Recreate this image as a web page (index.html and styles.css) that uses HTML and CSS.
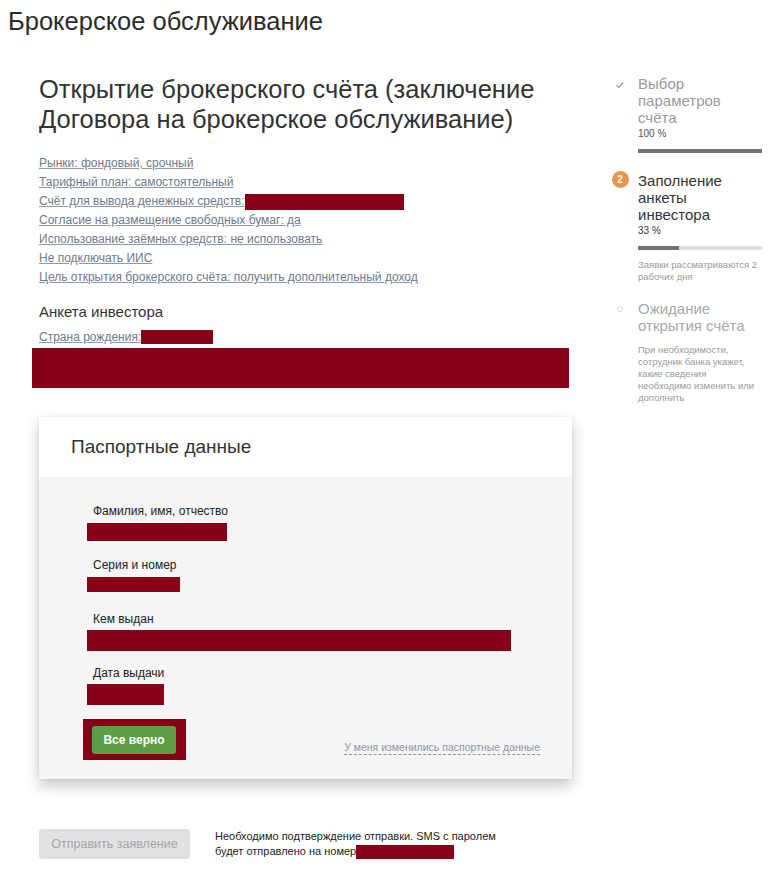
FILE: index.html
```html
<!DOCTYPE html>
<html lang="ru">
<head>
<meta charset="utf-8">
<title>Брокерское обслуживание</title>
<link rel="stylesheet" href="styles.css">
</head>
<body>
<h1 class="page-title">Брокерское обслуживание</h1>
<div class="layout">
  <main class="main">
    <h2 class="heading">Открытие брокерского счёта (заключение Договора на брокерское обслуживание)</h2>
    <ul class="params">
      <li><a class="param-link">Рынки: фондовый, срочный</a></li>
      <li><a class="param-link">Тарифный план: самостоятельный</a></li>
      <li><a class="param-link">Счёт для вывода денежных средств:</a><span class="redact r-account"></span></li>
      <li><a class="param-link">Согласие на размещение свободных бумаг: да</a></li>
      <li><a class="param-link">Использование заёмных средств: не использовать</a></li>
      <li><a class="param-link">Не подключать ИИС</a></li>
      <li><a class="param-link">Цель открытия брокерского счёта: получить дополнительный доход</a></li>
    </ul>
    <h3 class="section-title">Анкета инвестора</h3>
    <div class="params country"><a class="param-link">Страна рождения:</a><span class="redact r-country"></span></div>
    <div class="redact r-block"></div>

    <section class="card">
      <div class="card-head">Паспортные данные</div>
      <div class="card-body">
        <div class="field">
          <div class="field-label">Фамилия, имя, отчество</div>
          <div class="field-value"><span class="redact r-name"></span></div>
        </div>
        <div class="field">
          <div class="field-label">Серия и номер</div>
          <div class="field-value"><span class="redact r-number"></span></div>
        </div>
        <div class="field">
          <div class="field-label">Кем выдан</div>
          <div class="field-value"><span class="redact r-issuer"></span></div>
        </div>
        <div class="field">
          <div class="field-label">Дата выдачи</div>
          <div class="field-value"><span class="redact r-date"></span></div>
        </div>
        <div class="actions">
          <div class="confirm-frame"><button class="btn-ok" type="button">Все верно</button></div>
          <a class="change-link">У меня изменились паспортные данные</a>
        </div>
      </div>
    </section>

    <div class="submit-row">
      <button class="btn-submit" type="button" disabled>Отправить заявление</button>
      <p class="submit-note">Необходимо подтверждение отправки. SMS с паролем<br>будет отправлено на номер<span class="redact r-phone"></span></p>
    </div>
  </main>

  <aside class="steps">
    <div class="step done">
      <div class="step-icon">
        <svg width="10" height="8" viewBox="0 0 10 8"><path d="M1.5 4.2 L3.8 6.3 L8.3 1.5" fill="none" stroke="#9a9a9a" stroke-width="1.2"/></svg>
      </div>
      <div class="step-content">
        <div class="step-title">Выбор параметров счёта</div>
        <div class="step-percent">100 %</div>
        <div class="bar"><div class="bar-fill full"></div></div>
      </div>
    </div>
    <div class="step current">
      <div class="step-icon"><span class="badge">2</span></div>
      <div class="step-content">
        <div class="step-title">Заполнение анкеты инвестора</div>
        <div class="step-percent">33 %</div>
        <div class="bar"><div class="bar-fill third"></div></div>
        <div class="step-note">Заявки рассматриваются 2 рабочих дня</div>
      </div>
    </div>
    <div class="step pending">
      <div class="step-icon"><span class="dot"></span></div>
      <div class="step-content">
        <div class="step-title">Ожидание открытия счёта</div>
        <div class="step-note desc">При необходимости, сотрудник банка укажет, какие сведения необходимо изменить или дополнить</div>
      </div>
    </div>
  </aside>
</div>
</body>
</html>
```

FILE: styles.css
```css
* { box-sizing: border-box; }

body {
  margin: 0;
  background: #ffffff;
  font-family: "Liberation Sans", Arial, sans-serif;
  color: #333333;
}

.page-title {
  margin: 7px 0 0 8px;
  font-size: 25.5px;
  line-height: 28px;
  font-weight: normal;
  color: #2b2b2b;
}

.layout {
  display: flex;
  align-items: flex-start;
  padding-top: 39px;
  padding-left: 39px;
}

.main {
  width: 533px;
  flex: none;
}

.heading {
  margin: 0 0 20px;
  font-size: 25.5px;
  line-height: 30px;
  font-weight: normal;
  color: #333333;
}

.params {
  list-style: none;
  margin: 0;
  padding: 0;
  font-size: 12px;
  line-height: 19px;
}

.param-link {
  color: #6b7b8c;
  text-decoration: underline;
  text-decoration-color: #8d99a6;
}

.redact {
  display: inline-block;
  background: #870015;
  vertical-align: top;
}

.r-account { width: 159px; height: 16px; margin-top: 2px; }
.r-country { width: 72px; height: 14px; margin-top: 2px; }

.section-title {
  margin: 15px 0 6px;
  font-size: 15px;
  line-height: 20px;
  font-weight: normal;
  color: #333333;
}

.country { line-height: 19px; }

.r-block {
  display: block;
  width: 537px;
  height: 40px;
  margin: 1px 0 0 -7px;
}

.card {
  margin-top: 29px;
  background: #f5f5f5;
  box-shadow: 0 7px 14px rgba(0, 0, 0, 0.22), 0 0 3px rgba(0, 0, 0, 0.08);
}

.card-head {
  height: 60px;
  padding-left: 32px;
  background: #ffffff;
  font-size: 19px;
  line-height: 60px;
  color: #333333;
}

.card-body {
  padding: 26px 32px 19px 48px;
}

.field {
  height: 54px;
}

.field-label {
  padding-left: 6px;
  font-size: 12px;
  line-height: 16px;
  color: #222222;
}

.field-value {
  margin-top: 4px;
  display: flex;
}

.r-name { width: 140px; height: 18px; }
.r-number { width: 93px; height: 15px; }
.r-issuer { width: 424px; height: 21px; margin-top: -1px; }
.r-date { width: 77px; height: 21px; margin-top: -1px; }

.actions {
  display: flex;
  align-items: flex-start;
  justify-content: space-between;
  margin-left: -4px;
  margin-top: 0;
}

.confirm-frame {
  background: #870015;
  padding: 7px 10px 6px 9px;
}

.btn-ok {
  display: block;
  width: 84px;
  height: 28px;
  border: none;
  border-radius: 3px;
  background: #5d9e45;
  color: #ffffff;
  font-family: "Liberation Sans", Arial, sans-serif;
  font-size: 12px;
  font-weight: bold;
  padding: 0;
}

.change-link {
  margin-top: 21px;
  font-size: 10.5px;
  line-height: 14px;
  color: #8a97a4;
  border-bottom: 1px dashed #8a97a4;
}

.submit-row {
  display: flex;
  align-items: flex-start;
  margin-top: 50px;
}

.btn-submit {
  width: 151px;
  height: 30px;
  border: none;
  border-radius: 3px;
  background: #e1e1e1;
  color: #a6a6a6;
  font-family: "Liberation Sans", Arial, sans-serif;
  font-size: 12.5px;
  padding: 0;
  flex: none;
}

.submit-note {
  margin: 0 0 0 25px;
  font-size: 11px;
  line-height: 15px;
  color: #222222;
}

.r-phone { width: 98px; height: 14px; margin-top: 1px; }

/* Sidebar steps */
.steps {
  margin-left: 38px;
  margin-top: 1px;
  width: 152px;
  flex: none;
}

.step {
  display: grid;
  grid-template-columns: 20px 124px;
  column-gap: 8px;
}

.step.current { margin-top: 19px; }
.step.pending { margin-top: 17px; }

.step-icon {
  display: flex;
  justify-content: center;
  padding-top: 6px;
}

.step-title {
  width: 120px;
  font-size: 15px;
  line-height: 17px;
  color: #9a9a9a;
}

.current .step-title { color: #333333; }
.pending .step-title { color: #a8a8a8; }

.step-percent {
  margin-top: 1px;
  font-size: 10px;
  line-height: 14px;
  color: #555555;
}

.current .step-percent { color: #333333; }

.bar {
  margin-top: 8px;
  height: 4px;
  background: #dddddd;
}

.bar-fill {
  height: 100%;
  background: #737373;
}

.bar-fill.full { width: 100%; }
.bar-fill.third { width: 33%; }

.step-note {
  margin-top: 9px;
  font-size: 9.5px;
  line-height: 12px;
  color: #9a9a9a;
}

.step-note.desc { margin-top: 10px; }

.badge {
  display: flex;
  align-items: center;
  justify-content: center;
  width: 17px;
  height: 17px;
  margin-top: -7px;
  border-radius: 50%;
  background: #e8964c;
  color: #ffffff;
  font-size: 10px;
  font-weight: bold;
}

.dot {
  display: block;
  width: 6px;
  height: 6px;
  margin-top: 0;
  border: 1px solid #d8d8d8;
  border-radius: 50%;
}
```
